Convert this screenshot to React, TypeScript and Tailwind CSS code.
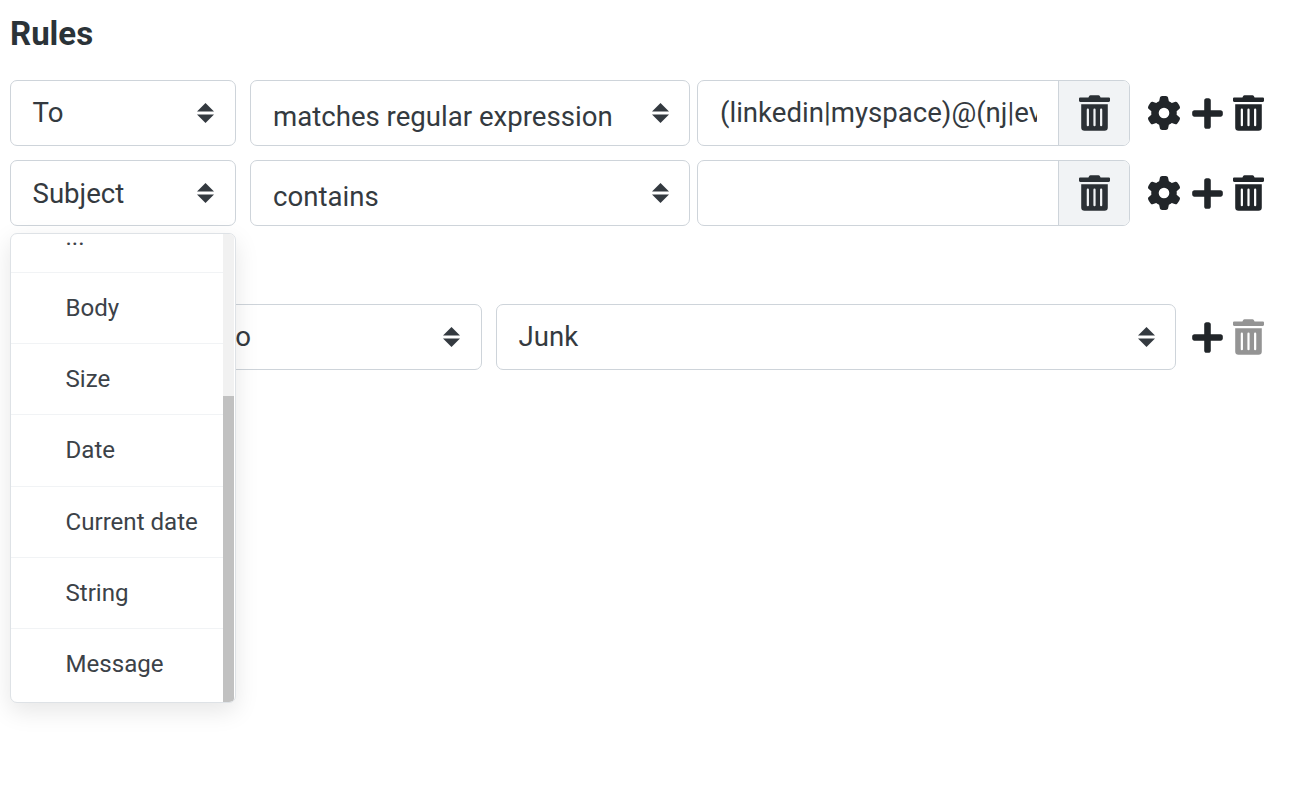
import { FaPlus, FaTrashAlt } from 'react-icons/fa';
import { FaGear } from 'react-icons/fa6';

const items = ['...', 'Body', 'Size', 'Date', 'Current date', 'String', 'Message'];

function Carets() {
  return (
    <svg width="17" height="20" viewBox="0 0 17 20" className="fill-[#343a40] shrink-0">
      <path d="M8.5 0 L17 8.5 H0 Z" />
      <path d="M0 11.5 H17 L8.5 20 Z" />
    </svg>
  );
}

function Select({ label, className, textClass }: { label: string; className: string; textClass?: string }) {
  return (
    <div className={`h-[66px] flex items-center justify-between border border-[#ced4da] rounded-[7px] bg-white text-[27.6px] text-[#343a40] ${className}`}>
      <span className={`whitespace-nowrap ${textClass ?? ''}`}>{label}</span>
      <Carets />
    </div>
  );
}

function InputGroup({ value }: { value: string }) {
  return (
    <div className="ml-[7px] w-[433px] h-[66px] flex border border-[#ced4da] rounded-[7px] overflow-hidden">
      <div className="flex-1 min-w-0 pl-[22px] pr-[21px] pt-[11px] text-[27.6px] text-[#343a40] whitespace-nowrap">
        <div className="overflow-hidden">{value}</div>
      </div>
      <div className="w-[71px] bg-[#f1f3f5] border-l border-[#ced4da] flex items-center justify-center">
        <FaTrashAlt className="text-[#2b3035] w-[31px] h-[36px]" />
      </div>
    </div>
  );
}

function RuleRow({ field, op, value, fieldClass }: { field: string; op: string; value: string; fieldClass: string }) {
  return (
    <div className="flex items-center mb-[14px]">
      <Select label={field} className="w-[226px] pl-[21.5px] pr-[21.5px]" textClass={fieldClass} />
      <Select label={op} className="ml-[14px] w-[440px] pl-[22px] pr-[20.5px]" textClass="mt-[8px]" />
      <InputGroup value={value} />
      <div className="flex items-center ml-[17px] text-[#212529]">
        <FaGear className="w-[34px] h-[34px]" />
        <FaPlus className="ml-[11px] w-[31px] h-[35px]" />
        <FaTrashAlt className="ml-[10px] w-[31px] h-[36px]" />
      </div>
    </div>
  );
}

export default function App() {
  return (
    <div className="relative h-[797px] bg-white pl-[10px] font-['Roboto',sans-serif]">
      <h2 className="pt-[14px] h-[80px] text-[33px] leading-[40px] font-bold text-[#2b3338]">Rules</h2>
      <RuleRow field="To" op="matches regular expression" value="(linkedin|myspace)@(nj|evernote|mail)" fieldClass="mt-0" />
      <RuleRow field="Subject" op="contains" value="" fieldClass="mt-[1px]" />
      <div className="h-[64px]" />
      <div className="flex items-center">
        <Select label="Move message to" className="w-[472px] pl-[22px] pr-[21.5px]" />
        <Select label="Junk" className="ml-[14px] w-[680px] pl-[21.5px] pr-[20.5px]" />
        <div className="flex items-center ml-[16px] text-[#212529]">
          <FaPlus className="w-[31px] h-[35px]" />
          <FaTrashAlt className="ml-[10px] w-[31px] h-[36px] text-[#949494]" />
        </div>
      </div>
      <div className="absolute left-[10px] top-[233px] w-[226px] h-[470px] bg-white border border-[#dee2e6] rounded-[7px] shadow-[0_8px_24px_rgba(0,0,0,0.1)] overflow-hidden flex">
        <div className="flex-1 -mt-[32px]">
          {items.map((item) => (
            <div key={item} className="h-[71.17px] flex items-center pl-[54.5px] border-b border-[#f1f3f5] last:border-b-0 text-[24.1px] text-[#3c4248] whitespace-nowrap">
              {item}
            </div>
          ))}
        </div>
        <div className="w-[11px] mr-[1px] bg-[#f1f1f1] flex flex-col justify-end">
          <div className="h-[306px] bg-[#c1c1c1]" />
        </div>
      </div>
    </div>
  );
}
